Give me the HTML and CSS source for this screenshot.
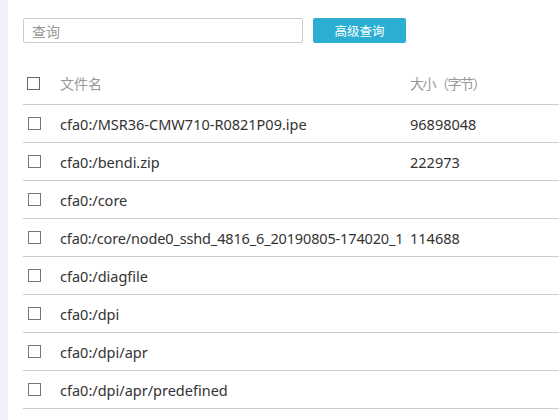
FILE: index.html
```html
<!DOCTYPE html>
<html>
<head>
<meta charset="utf-8">
<link rel="stylesheet" href="styles.css">
</head>
<body>
<div class="page">
  <div class="strip"></div>
  <div class="main">
    <div class="toolbar">
      <input class="search" type="text" placeholder="查询">
      <button class="btn">高级查询</button>
    </div>
    <table class="files">
      <colgroup><col class="c-check"><col class="c-name"><col class="c-size"></colgroup>
      <thead>
        <tr><th><span class="cb cb-head"></span></th><th><span class="name">文件名</span></th><th><span class="size-head">大小（字节）</span></th></tr>
      </thead>
      <tbody>
        <tr><td><span class="cb"></span></td><td><span class="name">cfa0:/MSR36-CMW710-R0821P09.ipe</span></td><td>96898048</td></tr>
        <tr><td><span class="cb"></span></td><td><span class="name">cfa0:/bendi.zip</span></td><td>222973</td></tr>
        <tr><td><span class="cb"></span></td><td><span class="name">cfa0:/core</span></td><td></td></tr>
        <tr><td><span class="cb"></span></td><td><span class="name long">cfa0:/core/node0_sshd_4816_6_20190805-174020_1</span></td><td>114688</td></tr>
        <tr><td><span class="cb"></span></td><td><span class="name">cfa0:/diagfile</span></td><td></td></tr>
        <tr><td><span class="cb"></span></td><td><span class="name">cfa0:/dpi</span></td><td></td></tr>
        <tr><td><span class="cb"></span></td><td><span class="name">cfa0:/dpi/apr</span></td><td></td></tr>
        <tr><td><span class="cb"></span></td><td><span class="name">cfa0:/dpi/apr/predefined</span></td><td></td></tr>
      </tbody>
    </table>
  </div>
</div>
</body>
</html>
```
FILE: styles.css
```css
html, body {
  margin: 0;
  padding: 0;
  background: #fff;
  overflow: hidden;
}
body {
  font-family: "Noto Sans", "Noto Sans CJK SC", sans-serif;
  font-size: 14.5px;
  color: #333;
}
.page {
  display: flex;
  height: 420px;
}
.strip {
  width: 8px;
  flex: none;
  background: #f0f0f8;
}
.main {
  flex: none;
  padding: 18px 0 0 15px;
}
.toolbar {
  display: flex;
  gap: 10px;
  height: 25px;
}
.search {
  box-sizing: border-box;
  width: 280px;
  height: 25px;
  margin: 0;
  border: 1px solid #ccc;
  border-radius: 2px;
  padding: 0 8px;
  font-family: "Noto Sans CJK SC", sans-serif;
  font-size: 14px;
  outline: none;
}
.search::placeholder { color: #999; }
.btn {
  box-sizing: border-box;
  width: 93px;
  height: 25px;
  margin: 0;
  border: none;
  border-radius: 2px;
  background: #2aafd2;
  color: #fff;
  font-family: "Noto Sans CJK SC", sans-serif;
  font-size: 12.5px;
  padding: 0;
}
.files {
  margin-top: 19px;
  border-collapse: collapse;
  table-layout: fixed;
  width: 620px;
}
.c-check { width: 37px; }
.c-name { width: 350px; }
.files th, .files td {
  padding: 0;
  border-bottom: 1px solid #ccc;
  text-align: left;
  white-space: nowrap;
  vertical-align: middle;
}
.files th {
  height: 42px;
  font-weight: normal;
  color: #999;
  font-family: "Noto Sans CJK SC", sans-serif;
  font-size: 14px;
}
.size-head { letter-spacing: -1.5px; }
.files td { height: 37px; }
.name {
  display: block;
  width: 348px;
  overflow: hidden;
}
.long { letter-spacing: -0.15px; }
.cb {
  display: block;
  box-sizing: border-box;
  width: 13px;
  height: 13px;
  margin-left: 5px;
  border: 1px solid #777;
  background: #fff;
}
.cb-head { margin-left: 4px; border-color: #666; }
```
